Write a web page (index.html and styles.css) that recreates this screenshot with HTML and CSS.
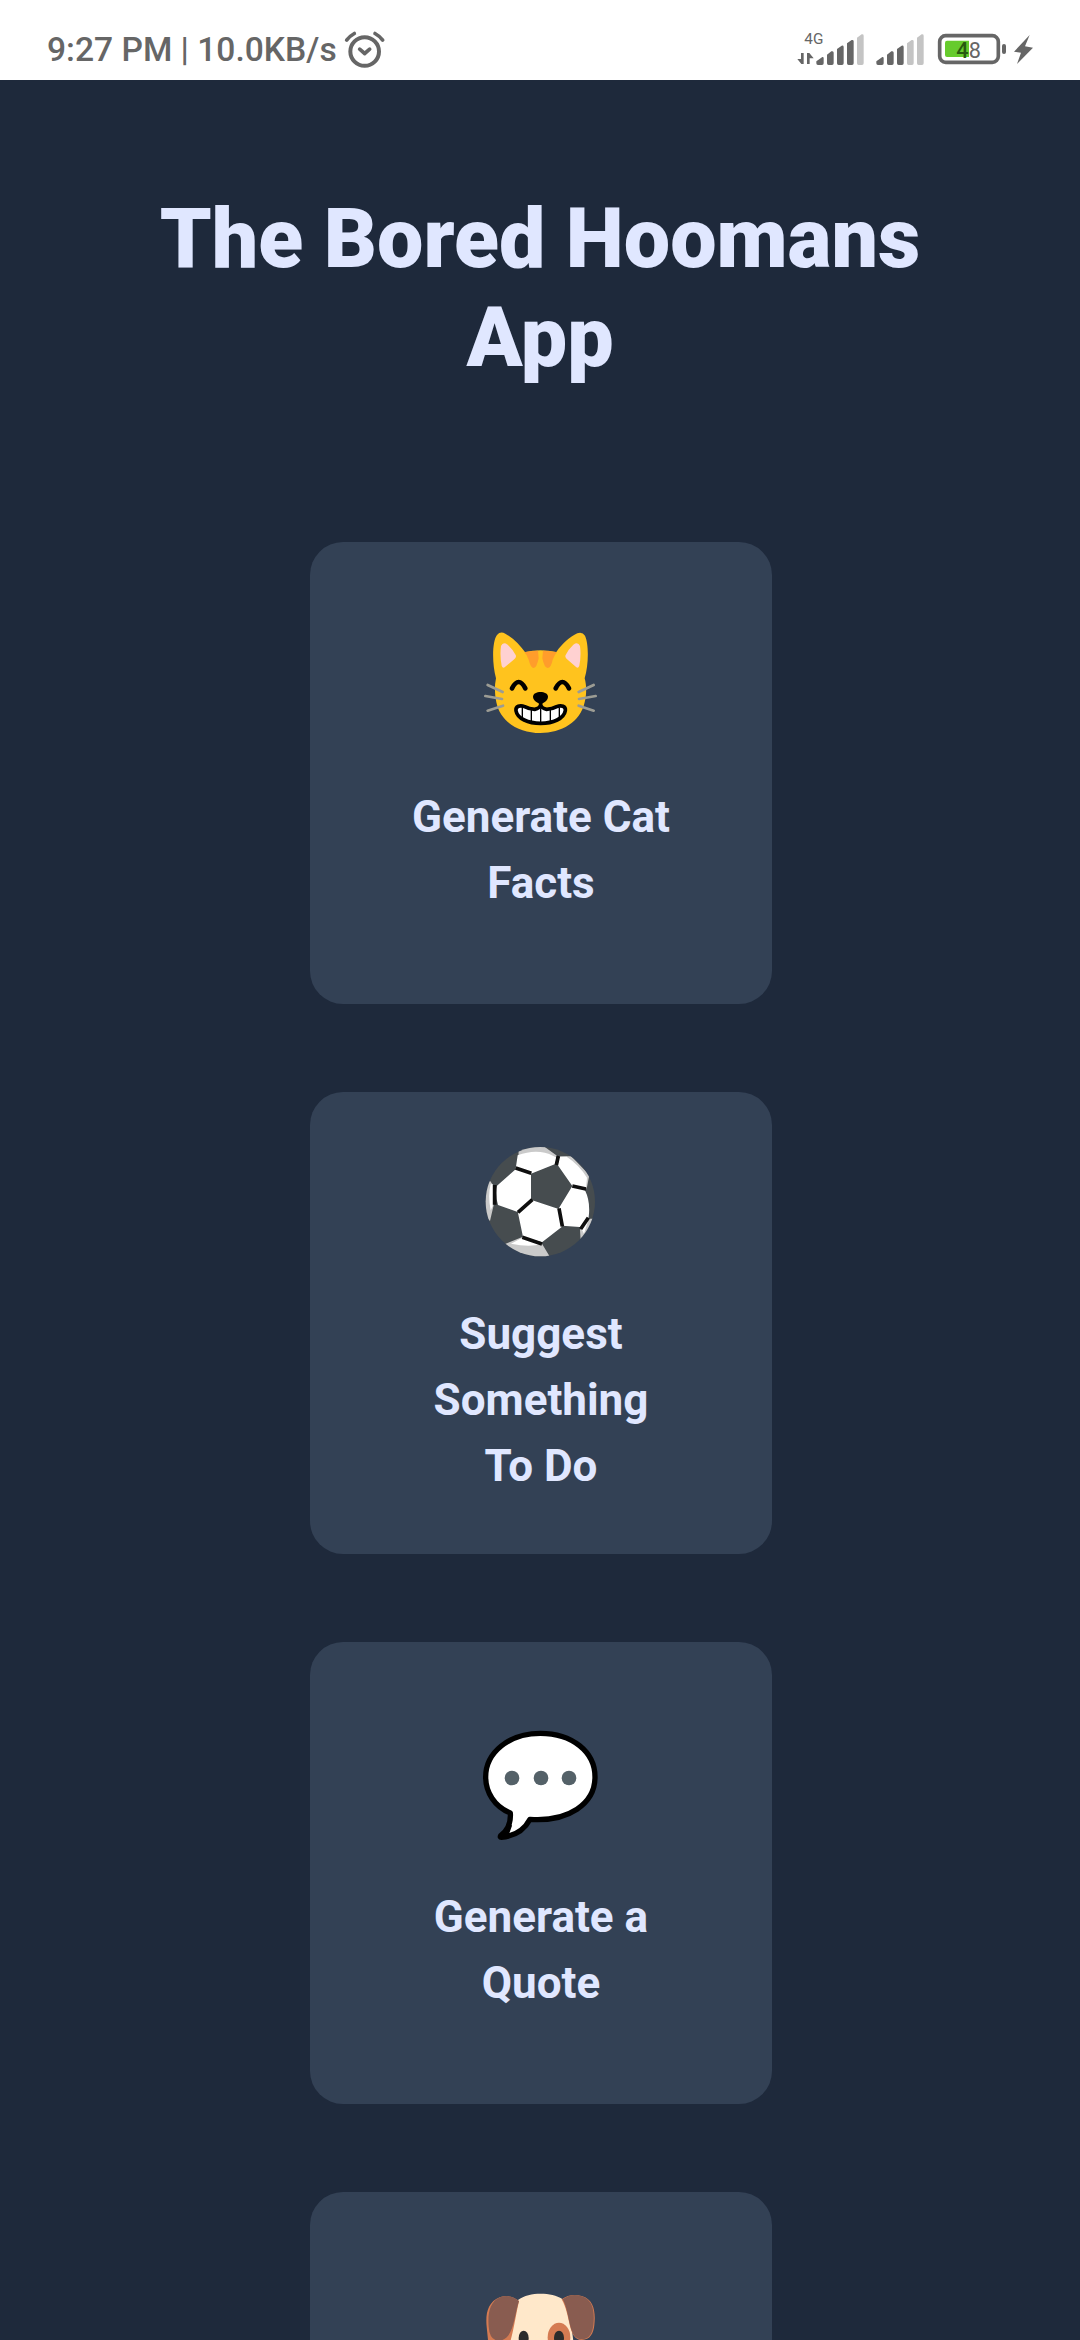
FILE: index.html
```html
<!DOCTYPE html>
<html lang="en">
<head>
<meta charset="utf-8">
<title>The Bored Hoomans App</title>
<link rel="stylesheet" href="styles.css">
</head>
<body>
<header class="status">
  <div class="status-left">
    <span class="clock">9:27 PM | 10.0KB/s</span>
    <svg class="alarm" viewBox="942 88 126 116" fill="none" stroke="#666" stroke-linecap="round">
      <circle cx="1004" cy="152" r="43" stroke-width="12"/>
      <path d="M989 145l15 13 15-13" stroke-width="11" stroke-linejoin="round"/>
      <path d="M950 118q10-13 23-20M1058 118q-10-13-23-20" stroke-width="11"/>
    </svg>
  </div>
  <svg class="indicators" viewBox="0 0 810 210">
    <text x="73" y="101" class="net">4G</text>
    <g fill="#666">
      <path d="M63 129h8v33h-7L52 147h11zM81 129h7l13 16H89v17h-8z"/>
      <path d="M109 154l18-13q4-1 4 4v15q0 5-5 5h-12q-5 0-5-5zM141 134l13-10q7-2 7 4v32q0 5-5 5h-10q-5 0-5-5zM171 117l14-10q6-1 6 4v49q0 5-5 5h-10q-5 0-5-5zM201 100l14-10q6-1 6 4v66q0 5-5 5h-10q-5 0-5-5z"/>
      <path d="M289 154l18-13q4-1 4 4v15q0 5-5 5h-12q-5 0-5-5zM321 134l13-10q7-2 7 4v32q0 5-5 5h-10q-5 0-5-5zM351 117l14-10q6-1 6 4v49q0 5-5 5h-10q-5 0-5-5z"/>
    </g>
    <path fill="#c4c4c4" d="M231 83l14-10q6-1 6 4v83q0 5-5 5h-10q-5 0-5-5zM381 100l14-10q6-1 6 4v66q0 5-5 5h-10q-5 0-5-5zM411 83l14-10q6-1 6 4v83q0 5-5 5h-10q-5 0-5-5z"/>
    <rect x="479" y="77" width="176" height="80" rx="18" fill="none" stroke="#666" stroke-width="11"/>
    <path fill="#66cb2d" d="M567 92v49h-66q-6 0-6-6V98q0-6 6-6z"/>
    <rect x="666" y="102" width="12" height="30" rx="6" fill="#666"/>
    <text x="529" y="143" class="level"><tspan class="level-on">4</tspan><tspan class="level-off">8</tspan></text>
    <path fill="#666" d="M749 75l-47 50 21 3-12 34 48-49-24-4z"/>
  </svg>
</header>
<main class="app">
  <h1 class="title">The Bored Hoomans<br>App</h1>
  <section class="cards">
    <article class="card">
      <svg class="emoji" viewBox="3 60 420 462">
        <path fill="#ffc31e" d="M78 205C66 160 66 95 81 75q10-12 25-4c26 14 45 36 59 55q46-10 94 0c18-25 40-45 63-56q15-5 23 7c12 26 11 88-1 128 6 22 6 48 0 72-13 60-70 92-133 92S91 337 79 277q-8-38-1-72z"/>
        <path fill="#ffd1d1" d="M93 108q6-14 20-4 15 14 24 31 4 7-6 14l-27 23q-6 4-9-5-6-30-2-59zM330 108q-6-14-20-4-15 14-23 31-4 7 6 14l26 23q6 4 9-5 6-30 2-59z"/>
        <path fill="#ff9d2b" d="M163 127q20-5 41-5l2 23q-6 29-15 29t-15-25q-5-15-13-22zM261 127q-20-5-42-5l-2 23q6 29 16 29t15-25q6-15 13-22z"/>
        <g fill="none" stroke="#9c9c94" stroke-width="8" stroke-linecap="round">
          <path d="M53 225l45 21M46 258l50 9M53 302l46-15M371 225l-45 21M377 258l-50 9M371 302l-45-15"/>
        </g>
        <path fill="none" stroke="#000" stroke-width="14" stroke-linecap="round" d="M126 235q20-38 40 0M257 235q20-38 40 0"/>
        <path d="M189 260c0-19 45-19 45 0 0 12-15 21-22 21s-23-9-23-21z"/>
        <path fill="#fff" stroke="#000" stroke-width="11" stroke-linejoin="round" d="M212 275v10q-3 10-18 13-16 0-30-8c-14-6-28-1-26 12 4 24 37 38 74 38s70-14 74-38c2-13-12-18-26-12q-14 8-30 8-15-3-18-13"/>
        <path fill="none" stroke="#000" stroke-width="4" d="M157 293v31M184 298v39M212 295v44M241 298v39M268 293v31"/>
      </svg>
      <p class="label">Generate Cat<br>Facts</p>
    </article>
    <article class="card">
      <svg class="emoji" viewBox="3 51 420 462">
        <defs><clipPath id="ball"><circle cx="211" cy="215" r="164"/></clipPath></defs>
        <g clip-path="url(#ball)">
          <path fill="#464c4f" d="M40 40h345v345H40z"/>
          <path fill="#cacaca" d="M146 60l30-15h40l45 32-5 10H145zM268 79h36l54 56-8 41zM60 152l11 16v58l-11 47-20-20v-80zM105 342l52-21 59 20 24 40H120zM330 300l28-34h20v40l-46 26z"/>
          <path fill="#fff" d="M143 76q60-22 107 2l10 5-4 19-73 29-46-15zM268 81l22-1q38 25 61 63l-3 33-41-8-44-63zM345 181q17 35 11 80-5 25-17 31l-62-5-10-53 40-66zM137 118l46 14v77l-40 37-59-21q-10-33-3-58zM187 211l79 26 9 54-59 46-57-16-15-72zM68 163v66l-6 12q-9-45 0-78zM123 341l34-18 58 18q-33 12-92 0zM335 298l20-27-13 40z"/>
          <path fill="none" stroke="#0f0f0f" stroke-width="11" d="M137 114l47 16M265 78l-6 27M307 168l41 9M74 165v59M187 209l-43 38M267 235l10 54M157 322l59 20M355 263l-23 34"/>
        </g>
      </svg>
      <p class="label">Suggest<br>Something<br>To Do</p>
    </article>
    <article class="card">
      <svg class="emoji" viewBox="3 60 420 462">
        <path fill="#fff" stroke="#000" stroke-width="16" stroke-linejoin="round" d="M211 70C306 70 375 125 375 201c0 80-79 135-195 127-17 32-48 51-86 54q-5 0-2-5c24-18 31-39 29-68C73 290 47 246 47 201 47 128 117 70 211 70z"/>
        <path d="M90 374q25-17 30-35l6 8-8 23 14-3-28 19H89z"/>
        <g fill="#546168"><circle cx="126" cy="204" r="22"/><circle cx="213" cy="204" r="22"/><circle cx="297" cy="204" r="22"/></g>
      </svg>
      <p class="label">Generate a<br>Quote</p>
    </article>
    <article class="card card-peek">
      <svg class="emoji" viewBox="3 60 420 462">
        <path fill="#ffe8ca" d="M144 120c35-25 100-23 133-3 28 45 30 110 40 183H108c4-60 10-130 36-180z"/>
        <path fill="#d57b52" d="M147 123q-25-22-58-11c-36 14-43 50-39 88l8 80h50c20-42 28-110 39-157zM275 118q26-19 60-10c38 10 42 50 38 88-3 24-12 44-38 44-42 0-32-75-60-122z"/>
        <path fill="#895c50" d="M147 123q-25-22-57-11c-32 14-37 50-34 88q3 40 29 42c47 0 47-76 62-119zM278 118q26-19 55-10c38 10 41 50 37 88-3 24-12 42-35 42-42 0-33-78-57-120z"/>
        <ellipse cx="267" cy="232" rx="34" ry="44" fill="#d57b52"/>
        <ellipse cx="161" cy="234" rx="15" ry="22" fill="#2b2b2b"/><ellipse cx="267" cy="234" rx="15" ry="22" fill="#2b2b2b"/>
      </svg>
    </article>
  </section>
</main>
</body>
</html>
```
FILE: styles.css
```css
* { box-sizing: border-box; }
body {
  margin: 0;
  height: 2340px;
  overflow: hidden;
  background: #1e293b;
  font-family: Roboto, "Noto Sans", sans-serif;
}
.status {
  height: 80px;
  padding: 0 30px 0 47px;
  display: flex;
  justify-content: space-between;
  background: #fff;
}
.status-left { display: flex; gap: 7px; padding-top: 30px; }
.clock { font-size: 33.6px; line-height: 40px; font-weight: 500; color: #666; white-space: pre; }
.alarm { width: 42px; height: 39px; }
.indicators { width: 270px; height: 70px; margin-top: 10px; }
.net { font-size: 46px; fill: #666; }
.level { font-size: 65px; font-weight: 400; }
.level-on { fill: #285910; font-weight: 500; }
.level-off { fill: #666; }
.app { height: 2260px; overflow: hidden; padding-top: 109px; }
.title {
  margin: 0;
  font-size: 82.5px;
  line-height: 99px;
  font-weight: 900;
  text-align: center;
  color: #e0e7ff;
}
.cards {
  display: flex;
  flex-direction: column;
  align-items: center;
  gap: 88px;
  padding: 155px 0 0 2px;
}
.card {
  width: 462px;
  height: 462px;
  flex: none;
  border-radius: 33px;
  background: #334155;
  display: flex;
  flex-direction: column;
  align-items: center;
  justify-content: center;
}
.card-peek { height: 148px; border-radius: 33px 33px 0 0; justify-content: flex-start; padding-top: 88px; }
.emoji { display: block; flex: none; width: 140px; height: 154px; overflow: visible; }
.label {
  margin: 0;
  font-size: 44px;
  line-height: 66px;
  font-weight: 700;
  text-align: center;
  color: #e0e7ff;
}
```
